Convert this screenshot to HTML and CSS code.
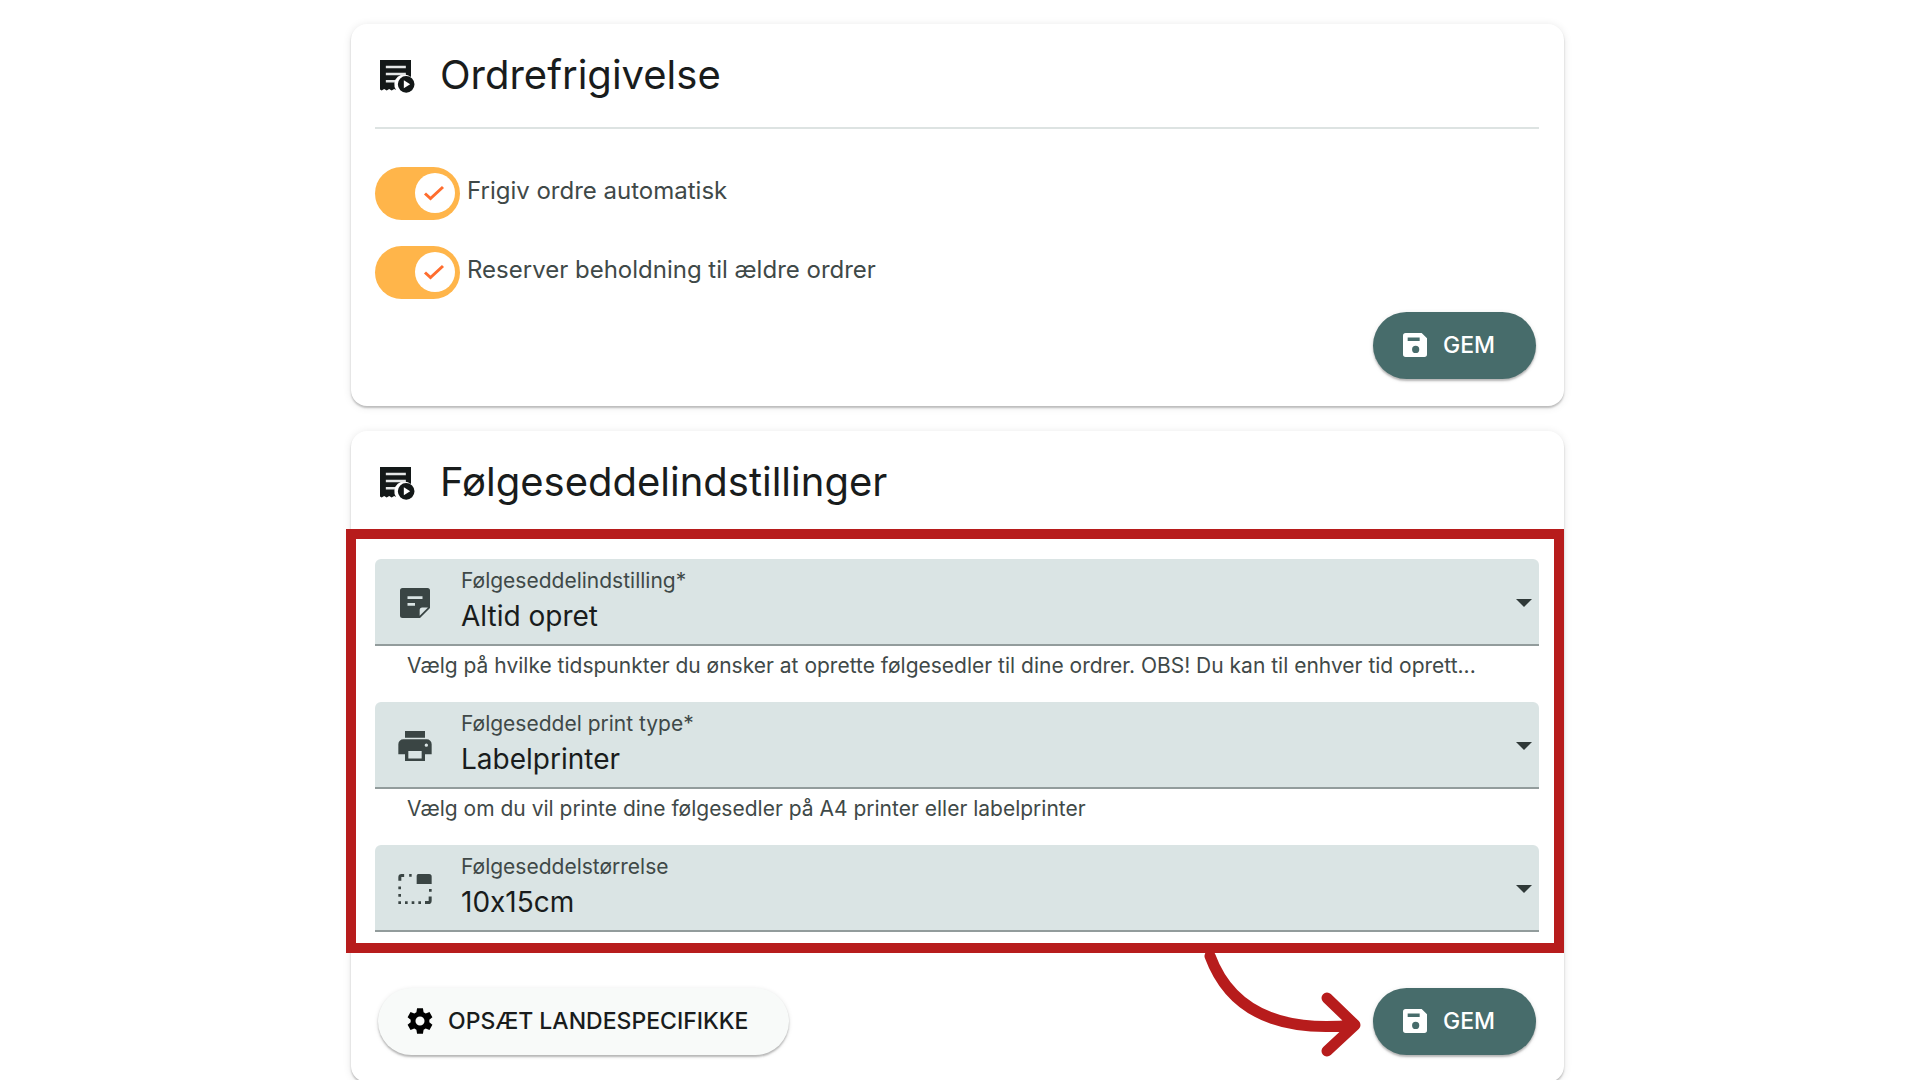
FILE: index.html
```
<!DOCTYPE html>
<html lang="da">

<head>
    <meta charset="UTF-8">
    <meta name="viewport" content="width=device-width, initial-scale=1.0">
    <title>Ordreindstillinger</title>

    <link rel="stylesheet" href="styles.css">
</head>

<body>
    <!-- fælles ikoner -->
    <svg class="sprite" aria-hidden="true">
        <symbol id="icon-receipt" viewBox="0 0 24 24">
            <path d="M3 3h18.600v10.200a6 6 0 0 0-9 7.800l-1.100-.6-1.500.9-1.500-.9-1.500.9-1.500-.9-1.500.9-1-.6z" />
            <path class="icon-line" d="M6.500 7.200h12M6.500 11.400h12M6.500 15.800h5.500" />
            <path fill-rule="evenodd" d="M18.700 12.600a5 5 0 1 1 0 10 5 5 0 0 1 0-10zM17.300 15.200v4.800l3.800-2.400z" />
        </symbol>
        <symbol id="icon-save" viewBox="0 0 24 24">
            <path fill-rule="evenodd" d="M17 3H5a2 2 0 0 0-2 2v14a2 2 0 0 0 2 2h14a2 2 0 0 0 2-2V7zM12.500 18a2.700 2.700 0 1 1 0-5.400 2.700 2.700 0 0 1 0 5.400zM15.500 9H6.500V6.300h9z" />
        </symbol>
    </svg>

    <main class="page">
        <section class="card">
            <div class="card-header">
                <svg class="icon"><use href="#icon-receipt" /></svg>
                <h2>Ordrefrigivelse</h2>
            </div>
            <div class="switches">
                <label class="switch">
                    <span class="switch-track">
                        <input type="checkbox" checked>
                        <svg viewBox="0 0 24 16"><path d="M3 8.500l5.500 5L21 2" /></svg>
                    </span>
                    Frigiv ordre automatisk
                </label>
                <label class="switch">
                    <span class="switch-track">
                        <input type="checkbox" checked>
                        <svg viewBox="0 0 24 16"><path d="M3 8.500l5.500 5L21 2" /></svg>
                    </span>
                    Reserver beholdning til ældre ordrer
                </label>
            </div>
            <div class="actions">
                <button type="button" class="btn btn-primary">
                    <svg><use href="#icon-save" /></svg>GEM
                </button>
            </div>
        </section>

        <section class="card">
            <div class="card-header">
                <svg class="icon"><use href="#icon-receipt" /></svg>
                <h2>Følgeseddelindstillinger</h2>
            </div>
            <div class="highlight">
                <div class="field">
                    <svg class="icon" viewBox="0 0 24 24">
                        <path fill-rule="evenodd" d="M4.500 3h15A1.500 1.500 0 0 1 21 4.500V15l-6 6H4.500A1.500 1.500 0 0 1 3 19.500v-15A1.500 1.500 0 0 1 4.500 3zM7.500 8v1.600h9V8zM7.500 12v1.600h4.500V12zM14.800 19.700l5-5h-3.500a1.500 1.500 0 0 0-1.500 1.500z" />
                    </svg>
                    <div class="field-text">
                        <label for="setting">Følgeseddelindstilling*</label>
                        <select id="setting">
                            <option>Altid opret</option>
                        </select>
                    </div>
                    <span class="caret"></span>
                </div>
                <p class="hint">Vælg på hvilke tidspunkter du ønsker at oprette følgesedler til dine ordrer. OBS! Du kan til enhver tid oprett...</p>

                <div class="field">
                    <svg class="icon" viewBox="0 0 24 24">
                        <path fill-rule="evenodd" d="M6 3h12v4H6zM5 8h14a3 3 0 0 1 3 3v6h-4v4H6v-4H2v-6a3 3 0 0 1 3-3zM8 15v4.500h8V15zM18.800 10.500a1 1 0 1 0 0 2 1 1 0 0 0 0-2z" />
                    </svg>
                    <div class="field-text">
                        <label for="print-type">Følgeseddel print type*</label>
                        <select id="print-type">
                            <option>Labelprinter</option>
                        </select>
                    </div>
                    <span class="caret"></span>
                </div>
                <p class="hint">Vælg om du vil printe dine følgesedler på A4 printer eller labelprinter</p>

                <div class="field">
                    <svg class="icon" viewBox="0 0 24 24">
                        <path d="M2 7V5a2 2 0 0 1 2-2h1.500v1.800H3.800V7zM8.500 3h1.500v1.600H8.500zM14 3h6.500A1.500 1.500 0 0 1 22 4.500V9h-9V4a1 1 0 0 1 1-1zM20.400 12H22v1.600h-1.600zM22 16.500V19a2 2 0 0 1-2 2h-2v-1.800h2.200v-2.700zM2 10.500h1.600v1.600H2zM2 15h1.600v1.600H2zM2 19.400h1.600V21H2zM6 19.400h1.600V21H6zM10 19.400h1.600V21H10zM14 19.400h1.600V21H14z" />
                    </svg>
                    <div class="field-text">
                        <label for="size">Følgeseddelstørrelse</label>
                        <select id="size">
                            <option>10x15cm</option>
                        </select>
                    </div>
                    <span class="caret"></span>
                </div>
            </div>
            <div class="actions actions-split">
                <button type="button" class="btn">
                    <svg viewBox="0 0 24 24">
                        <path fill-rule="evenodd" d="M9.800 2.500h4.400l.5 2.900 1.600.9 2.800-1 2.200 3.800-2.300 1.900v2l2.300 1.900-2.200 3.800-2.800-1-1.600.9-.5 2.900H9.800l-.5-2.900-1.600-.9-2.800 1-2.200-3.800L5 13v-2L2.700 9.100l2.200-3.800 2.800 1 1.600-.9zM12 8.600a3.400 3.400 0 1 0 0 6.800 3.400 3.400 0 0 0 0-6.800z" />
                    </svg>OPSÆT LANDESPECIFIKKE
                </button>
                <button type="button" class="btn btn-primary">
                    <svg><use href="#icon-save" /></svg>GEM
                </button>
                <svg class="arrow" viewBox="0 0 160 110">
                    <path d="M8 3c20 54 68 77 144 69M125 45l28 27-28 26" />
                </svg>
            </div>
        </section>
    </main>
</body>

</html>
```
FILE: styles.css
```
* {
    box-sizing: border-box;
}

body {
    margin: 0;
    height: 100vh;
    overflow: hidden;
    background-color: white;
    color: #191c1c;
    font-family: Inter, "Liberation Sans", sans-serif;
    font-feature-settings: "calt" 0;
}

h2 {
    margin: 0;
    font-size: 40px;
    font-weight: 400;
}

.sprite {
    display: none;
}

.page {
    display: flex;
    flex-direction: column;
    gap: 25px;
    padding: 24px 356px 24px 351px;
}

.card {
    padding: 0 25px 27px 24px;
    background-color: white;
    border-radius: 16px;
    box-shadow: 0 2px 2px rgba(0, 0, 0, .22), 0 1px 8px rgba(0, 0, 0, .1);
}

.card-header {
    display: flex;
    align-items: center;
    gap: 25px;
    height: 105px;
    padding-bottom: 2px;
    border-bottom: 2px solid #dde3e2;
}

.icon {
    width: 40px;
    height: 40px;
    flex-shrink: 0;
    fill: #131818;
}

.icon-line {
    stroke: #e4e7e7;
    stroke-width: 1.500;
}

/* kontakter */
.switches {
    display: flex;
    flex-direction: column;
    gap: 26px;
    padding: 38px 0 13px;
}

.switch {
    display: flex;
    gap: 7px;
    height: 53px;
    font-size: 24px;
    line-height: 48px;
    color: #3f4948;
}

.switch-track {
    position: relative;
    display: flex;
    width: 85px;
    height: 53px;
}

.switch input {
    appearance: none;
    width: 100%;
    margin: 0;
    padding: 6px 5px;
    border-radius: 27px;
    background-color: #ffb54a;
}

.switch input::before {
    content: "";
    display: block;
    width: 40px;
    height: 40px;
    margin-left: auto;
    border-radius: 50%;
    background-color: white;
}

.switch svg {
    position: absolute;
    top: 18px;
    right: 14px;
    width: 24px;
    height: 16px;
    fill: none;
    stroke: #ff6d2e;
    stroke-width: 3;
}

/* knapper */
.actions {
    position: relative;
    display: flex;
    justify-content: flex-end;
    padding: 0 3px;
}

.actions-split {
    justify-content: space-between;
    padding-top: 35px;
}

.btn {
    display: flex;
    align-items: center;
    gap: 12px;
    height: 67px;
    padding: 0 41px 2px 26px;
    border: none;
    border-radius: 34px;
    background-color: #f8faf9;
    box-shadow: 0 2px 2px rgba(0, 0, 0, .24), 0 1px 5px rgba(0, 0, 0, .1);
    color: #191c1c;
    font-family: inherit;
    font-size: 23px;
    font-weight: 500;
}

.btn svg {
    width: 32px;
    height: 32px;
    fill: black;
}

.btn-primary {
    background-color: #476c6b;
    color: white;
}

.btn-primary svg {
    fill: white;
}

/* felter */
.highlight {
    position: relative;
    margin: -7px -25px 0 -29px;
    padding: 20px 15px 11px 19px;
    border: 10px solid #b71c1c;
    background-color: white;
}

.field {
    display: flex;
    align-items: center;
    height: 87px;
    padding: 2px 7px 0 20px;
    border-bottom: 2px solid #929c9c;
    border-radius: 6px 6px 0 0;
    background-color: #dae4e4;
    color: #3f4948;
}

.field .icon {
    fill: #3a4544;
}

.field-text {
    display: flex;
    flex-direction: column;
    flex: 1;
    padding: 0 0 4px 26px;
}

.field label {
    font-size: 21px;
    line-height: 30px;
}

.field select {
    appearance: none;
    height: 40px;
    padding: 0;
    border: none;
    background: none;
    color: #191c1c;
    font-family: inherit;
    font-feature-settings: inherit;
    font-size: 28px;
}

.caret {
    border: 8px solid transparent;
    border-top-color: #2f3938;
    border-bottom: none;
}

.hint {
    margin: 0;
    padding: 0 32px 16px;
    font-size: 21px;
    line-height: 40px;
    color: #3f4948;
    white-space: nowrap;
}

.arrow {
    position: absolute;
    top: 0;
    right: 177px;
    width: 160px;
    height: 110px;
    fill: none;
    stroke: #b71c1c;
    stroke-width: 11;
    stroke-linecap: round;
    stroke-linejoin: round;
}
```
